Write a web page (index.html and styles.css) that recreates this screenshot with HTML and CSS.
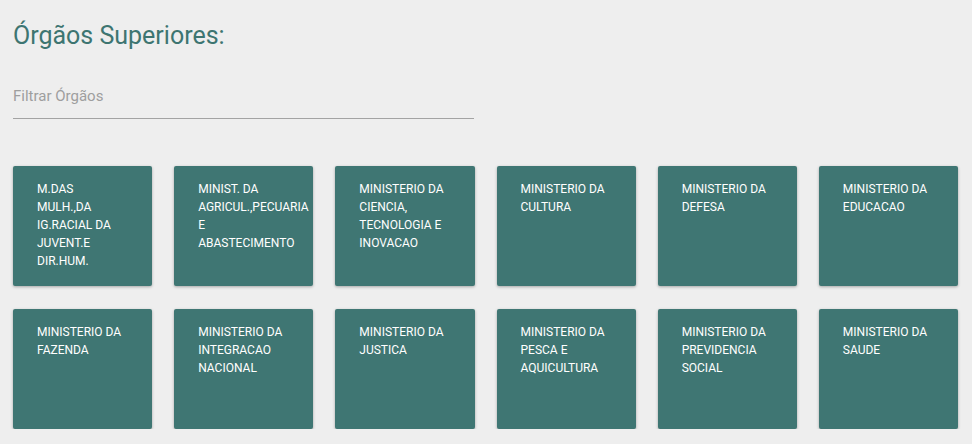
FILE: index.html
```html
<!DOCTYPE html>
<html lang="pt">
<head>
<meta charset="utf-8">
<title>Órgãos Superiores</title>
<link rel="stylesheet" href="styles.css">
</head>
<body>
<div class="page">
  <h1 class="title">Órgãos Superiores:</h1>
  <div class="filter"><span class="filter-label">Filtrar Órgãos</span></div>
  <div class="grid">
    <div class="card">M.DAS MULH.,DA IG.RACIAL DA JUVENT.E DIR.HUM.</div>
    <div class="card">MINIST. DA AGRICUL.,PECUARIA E ABASTECIMENTO</div>
    <div class="card">MINISTERIO DA CIENCIA, TECNOLOGIA E INOVACAO</div>
    <div class="card">MINISTERIO DA CULTURA</div>
    <div class="card">MINISTERIO DA DEFESA</div>
    <div class="card">MINISTERIO DA EDUCACAO</div>
    <div class="card">MINISTERIO DA FAZENDA</div>
    <div class="card">MINISTERIO DA INTEGRACAO NACIONAL</div>
    <div class="card">MINISTERIO DA JUSTICA</div>
    <div class="card">MINISTERIO DA PESCA E AQUICULTURA</div>
    <div class="card">MINISTERIO DA PREVIDENCIA SOCIAL</div>
    <div class="card">MINISTERIO DA SAUDE</div>
  </div>
</div>
</body>
</html>
```
FILE: styles.css
```css
html, body {
  margin: 0;
  padding: 0;
  background: #eeeeee;
  font-family: Roboto, "Noto Sans", sans-serif;
  overflow: hidden;
}
.page {
  padding: 0 14px 0 13px;
}
.title {
  margin: 21px 0 0;
  font-size: 25px;
  font-weight: 400;
  line-height: 29px;
  color: #3d7571;
}
.filter {
  width: 461px;
  margin-top: 37px;
  padding-bottom: 13px;
  border-bottom: 1px solid #a3a3a3;
  line-height: 18px;
}
.filter-label {
  font-size: 15px;
  color: #9e9e9e;
}
.grid {
  margin-top: 47px;
  display: grid;
  grid-template-columns: repeat(6, minmax(0, 1fr));
  column-gap: 22px;
  row-gap: 23px;
}
.card {
  height: 120px;
  min-width: 0;
  box-sizing: border-box;
  padding: 14px 24px;
  background: #3f7673;
  color: #ffffff;
  font-size: 12px;
  line-height: 18px;
  border-radius: 2px;
  box-shadow: 0 1px 3px rgba(0, 0, 0, 0.3);
}
```
